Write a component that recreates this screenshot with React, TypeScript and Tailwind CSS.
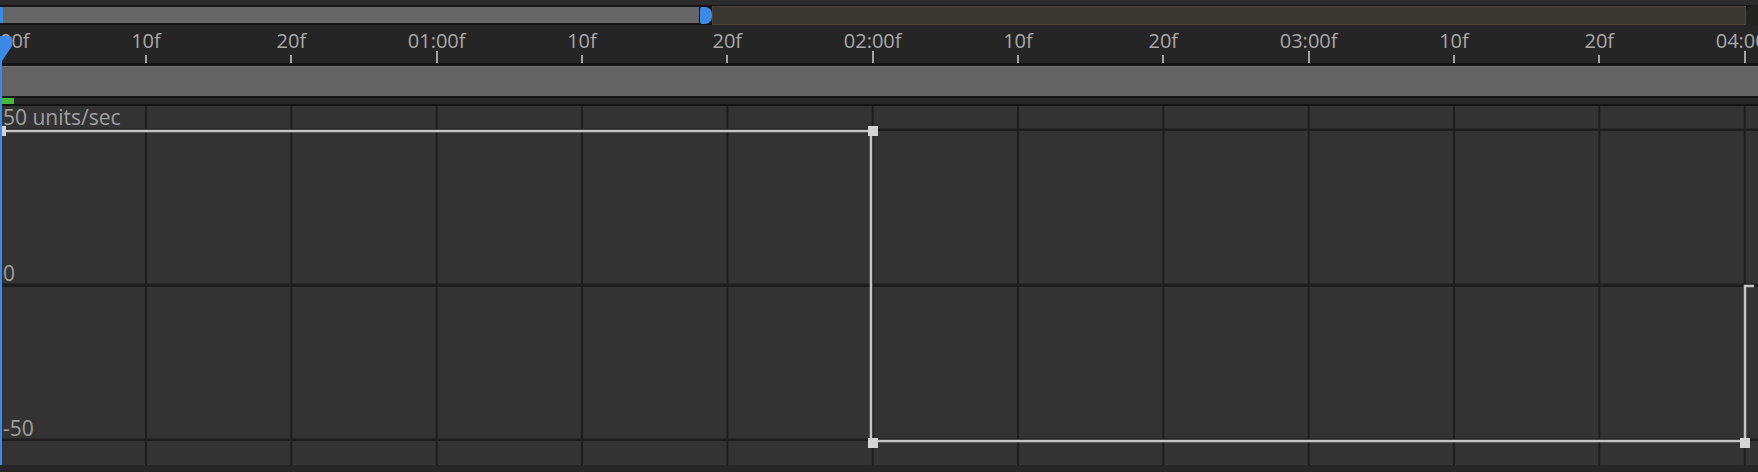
const ticks = [
  "00f",
  "10f",
  "20f",
  "01:00f",
  "10f",
  "20f",
  "02:00f",
  "10f",
  "20f",
  "03:00f",
  "10f",
  "20f",
  "04:00f",
];

const step = 145.333;
const gridX = Array.from({ length: 12 }, (_, i) => 0.67 + step * (i + 1));

function Graph() {
  return (
    <div className="relative h-[359px] w-full">
      <svg width="1758" height="359" className="block">
        <rect width="1758" height="359" fill="#333333" />
        <rect x="0" y="22.5" width="1758" height="2.5" fill="#1e1e1e" />
        <rect x="0" y="177.5" width="1758" height="3.5" fill="#1e1e1e" />
        <rect x="0" y="332.5" width="1758" height="2.5" fill="#1e1e1e" />
        {gridX.map((x) => (
          <rect key={x} x={x - 1} y="0" width="2" height="359" fill="#1e1e1e" />
        ))}
        <path
          d="M3 25 H871 V335 H1745 V180 H1754"
          fill="none"
          stroke="#c4c4c4"
          strokeWidth="2.5"
        />
        <rect x="-4" y="20" width="10" height="10" fill="#d4d4d4" />
        <rect x="868" y="20" width="10" height="10" fill="#d4d4d4" />
        <rect x="868" y="332" width="10" height="10" fill="#d4d4d4" />
        <rect x="1740" y="332" width="10" height="10" fill="#d4d4d4" />
      </svg>
      <span className="absolute left-[3px] top-[1px] text-[21px] leading-none text-[#a0a0a0]">
        50 units/sec
      </span>
      <span className="absolute left-[3px] top-[157px] text-[21px] leading-none text-[#a0a0a0]">
        0
      </span>
      <span className="absolute left-[3px] top-[312px] text-[21px] leading-none text-[#a0a0a0]">
        -50
      </span>
    </div>
  );
}

export default function App() {
  return (
    <div className="relative h-[472px] w-[1758px] overflow-hidden bg-[#262626] font-['Open_Sans',sans-serif]">
      <div className="h-[5px] bg-[#2b2b2b]" />

      {/* scroll bar */}
      <div className="flex h-[20px] items-start bg-[#151515]">
        <div className="mt-[2px] h-[16px] w-[699px] shrink-0 border-l-[3px] border-[#3d8ae6] bg-[#666666]" />
        <div className="mt-[2px] ml-px h-[17px] w-[12px] shrink-0 rounded-r-[7px] rounded-l-[2px] bg-[#3d8ae6]" />
        <div className="mt-px h-[19px] w-[1034px] shrink-0 border border-[#4b4738] bg-[#3a3731]" />
        <div className="h-[20px] flex-1 rounded-tl-[8px] bg-[#222222]" />
      </div>

      {/* ruler */}
      <div className="flex h-[38px] overflow-hidden bg-[#252525]">
        <div className="ml-[-72px] flex shrink-0">
          {ticks.map((t, i) => (
            <div
              key={i}
              className="flex w-[145.333px] shrink-0 flex-col items-center justify-between"
            >
              <span
                className={
                  i === 0
                    ? "mt-[6px] self-start pl-[72px] text-[20px] leading-none text-[#a8a8a8]"
                    : "mt-[6px] whitespace-nowrap text-[20px] leading-none text-[#a8a8a8]"
                }
              >
                {t}
              </span>
              <div
                className={
                  i === 0
                    ? "h-[8px] w-[2px]"
                    : i % 3 === 0
                      ? "h-[15px] w-[2px] bg-[#a3a3a3]"
                      : "h-[8px] w-[2px] bg-[#a3a3a3]"
                }
              />
            </div>
          ))}
        </div>
      </div>

      <div className="h-[3px] bg-[#141414]" />
      <div className="h-[30px] border-t border-[#717171] bg-[#636363]" />
      <div className="h-[2px] bg-[#141414]" />
      <div className="flex h-[6px] bg-[#262626]">
        <div className="ml-[2px] w-[12px] bg-[#45b83e]" />
      </div>
      <div className="h-[2px] bg-[#141414]" />

      <Graph />

      {/* playhead */}
      <div className="absolute left-0 top-[50px] h-[415px] w-[2px] bg-[#3d8ae6]" />
      <svg
        className="absolute left-0 top-0"
        width="14"
        height="64"
        viewBox="0 0 14 64"
      >
        <path d="M0 36 H9 Q12 36 12 39 V46 L2 61 H0 Z" fill="#3d8ae6" />
      </svg>
    </div>
  );
}
